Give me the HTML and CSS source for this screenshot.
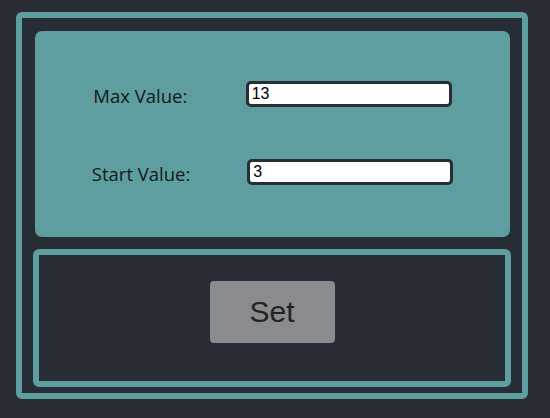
FILE: index.html
```html
<!DOCTYPE html>
<html>
<head>
<meta charset="utf-8">
<link rel="stylesheet" href="styles.css">
</head>
<body>
<div class="counter">
  <div class="settings">
    <div class="row">
      <span class="label">Max Value:</span>
      <input class="field" type="number" value="13">
    </div>
    <div class="row">
      <span class="label">Start Value:</span>
      <input class="field" type="number" value="3">
    </div>
  </div>
  <div class="controls">
    <button class="btn">Set</button>
  </div>
</div>
</body>
</html>
```
FILE: styles.css
```css
html, body {
  margin: 0;
  padding: 0;
  background: #282c34;
}
body {
  width: 550px;
  height: 418px;
  overflow: hidden;
}
.counter {
  box-sizing: border-box;
  margin: 12px 0 0 16px;
  width: 512px;
  height: 387px;
  border: 6px solid #5f9ea0;
  border-radius: 6px;
  display: flex;
  flex-direction: column;
}
.settings {
  margin: 13px 12px 0 13px;
  height: 206px;
  background: #5f9ea0;
  border-radius: 7px;
  display: flex;
  flex-direction: column;
  padding-top: 48px;
  gap: 48px;
  box-sizing: border-box;
}
.row {
  height: 30px;
  display: flex;
  align-items: center;
  justify-content: space-evenly;
}
.label {
  font-family: "Open Sans", sans-serif;
  font-size: 18.5px;
  color: #111a1a;
  padding-top: 2px;
}
.field {
  box-sizing: border-box;
  width: 206px;
  height: 26px;
  border: 3px solid #282c34;
  border-radius: 5px;
  background: #fff;
  font-family: "Liberation Sans", Arial, sans-serif;
  font-size: 16px;
  color: #000;
  padding: 0 3px;
  margin: 0;
  outline: none;
  -moz-appearance: textfield;
}
.field::-webkit-inner-spin-button,
.field::-webkit-outer-spin-button {
  -webkit-appearance: none;
  margin: 0;
}
.controls {
  box-sizing: border-box;
  margin: 12px 11px 0 11px;
  height: 138px;
  border: 6px solid #5f9ea0;
  border-radius: 6px;
  display: flex;
  justify-content: center;
  align-items: flex-start;
  padding-top: 26px;
}
.btn {
  width: 125px;
  height: 62px;
  border: none;
  border-radius: 4px;
  background: #8a8b8f;
  color: #222;
  font-family: "Liberation Sans", Arial, sans-serif;
  font-size: 30px;
  padding: 0;
}
```
